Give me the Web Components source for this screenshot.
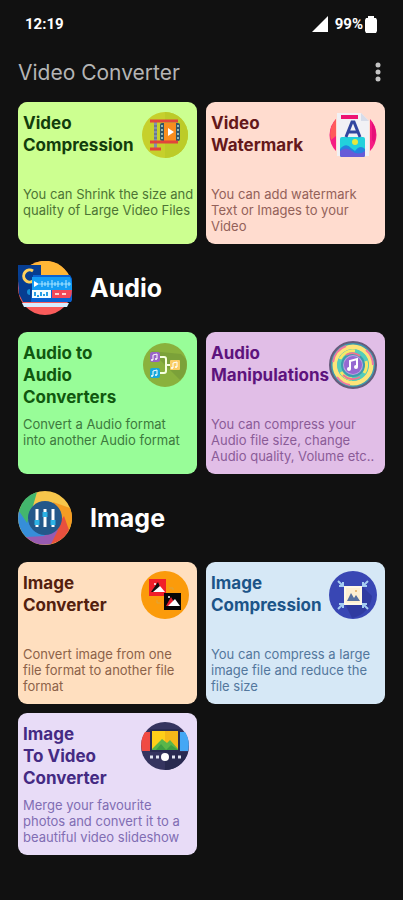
<!DOCTYPE html>
<html lang="en">
<head>
<meta charset="utf-8">
<meta name="viewport" content="width=device-width, initial-scale=1">
<title>Video Converter</title>
<style>
    body {
        margin: 0;
        min-height: 100vh;
        background-color: #111;
        color: #fff;
        font-family: Inter, "Liberation Sans", sans-serif;
    }
</style>
</head>
<body>

<status-bar time="12:19" battery="99%"></status-bar>
<app-header>Video Converter</app-header>

<main>
    <card-grid>
        <tool-card style="--card-bg:#ccff90; --card-title:#123d0c; --card-text:#4c7434">
            <span slot="title">Video<br>Compression</span>
            <svg slot="icon" viewBox="0 0 48 48">
                <circle cx="24" cy="24" r="23" fill="#c6d02c"/>
                <path d="M24 1a23 23 0 0 1 0 46z" fill="#bccb28"/>
                <rect x="13" y="11" width="3" height="27" fill="#8291ad"/>
                <path d="M13 15h3M13 19h3M13 23h3M13 27h3M13 31h3" stroke="#53627f"/>
                <rect x="19" y="12" width="20" height="18" rx="2" fill="#315568"/>
                <path d="M20 15h2M20 19h2M20 23h2M20 27h2M36 15h2M36 19h2M36 23h2M36 27h2" stroke="#93b8b5" stroke-width="2"/>
                <rect x="23" y="12" width="12" height="18" fill="#f78d1f"/>
                <path d="M27 17l6 4-6 4z" fill="#fff"/>
                <path d="M9 10h28M9 31h28M9 38h11" stroke="#e2453a" stroke-width="3"/>
            </svg>
            You can Shrink the size and<br>quality of Large Video Files
        </tool-card>
        <tool-card style="--card-bg:#ffdccf; --card-title:#64181a; --card-text:#936159">
            <span slot="title">Video<br>Watermark</span>
            <svg slot="icon" viewBox="0 0 48 48">
                <path d="M7 8a23 23 0 0 0 0 32z" fill="#f51c83"/>
                <path d="M7 8a23 23 0 0 0-5 21l5-4z" fill="#ff5b5b"/>
                <path d="M41 8a23 23 0 0 1 0 32z" fill="#f51c83"/>
                <path d="M43 11a23 23 0 0 1 2 21l-2-3z" fill="#e60e78"/>
                <path d="M8 2h24l8 8v35H8z" fill="#f1f1f5"/>
                <path d="M32 2v8h8z" fill="#d7dce9"/>
                <rect x="12" y="4" width="17" height="4" fill="#ee1473"/>
                <rect x="11" y="26" width="25" height="20" rx="2" fill="#22d1dc"/>
                <circle cx="26" cy="31" r="3" fill="#e6e83e"/>
                <path d="M11 38q6-7 11-1l4 3q5-7 10-2v6a2 2 0 0 1-2 2H13a2 2 0 0 1-2-2z" fill="#2383df"/>
                <path d="M11 40q6-5 12 0t13 0v4a2 2 0 0 1-2 2H13a2 2 0 0 1-2-2z" fill="#665bd8"/>
                <path d="M17 26l6-15h2l6 15M19 21h10" fill="none" stroke="#31469f" stroke-width="3"/>
            </svg>
            You can add watermark<br>Text or Images to your<br>Video
        </tool-card>
    </card-grid>

    <section-heading>
        <svg slot="icon" viewBox="0 0 54 54">
            <circle cx="27" cy="27" r="27" fill="#f95c5b"/>
            <path d="M2 17A27 27 0 0 1 54 24v3H2z" fill="#ffb636"/>
            <path d="M0 4h23v10h29a27 27 0 0 1 1 27H8L1 33z" fill="#0862d3"/>
            <path d="M0 4h23v10h-8l-2 27H5L1 33z" fill="#063d91"/>
            <path d="M15 10a6 6 0 1 0 0 10" fill="none" stroke="#ffd05c" stroke-width="3"/>
            <path d="M12 28a3 3 0 0 0 0 6z" fill="#148dd5"/>
            <path d="M14 16h38a27 27 0 0 1 2 13H14z" fill="#149df3"/>
            <path d="M16 20l5 3-5 3z" fill="#fff"/>
            <path d="M21 23h32" stroke="#8fdcff"/>
            <path d="M24 20v6M27 21v4M30 20v6M34 19v8M37 21v4M40 20v6M44 21v4M48 19v8M51 21v4" stroke="#b6eaff"/>
            <rect x="14" y="29" width="19" height="8" fill="#f3fbff"/>
            <path d="M17 31v4M20 34v2M23 31v4M26 33v2M29 31v4" stroke="#279de5" stroke-width="2"/>
            <path d="M34 29h20q0 5-2 8H34z" fill="#f34959"/>
            <path d="M37 33h4M44 33h4" stroke="#ffd5d5" stroke-width="2"/>
            <path d="M4 42h47l-2 4H6z" fill="#d8edff"/>
        </svg>
        Audio
    </section-heading>

    <card-grid>
        <tool-card style="--card-bg:#98fd98; --card-title:#10580f; --card-text:#3d793d">
            <span slot="title">Audio to<br>Audio<br>Converters</span>
            <svg slot="icon" viewBox="0 0 48 48">
                <circle cx="24" cy="24" r="22" fill="#8ab13d"/>
                <path d="M10 10l29 29a22 22 0 0 0 6-21l-5-5z" fill="#7ba139"/>
                <path d="M18 16h5q2 0 2 2v12q0 2-2 2h-5M25 24h7" fill="none" stroke="#f6ffdf" stroke-width="2"/>
                <rect x="9" y="11" width="10" height="10" rx="2" fill="#9a63c7"/>
                <rect x="9" y="27" width="10" height="10" rx="2" fill="#17a7dc"/>
                <rect x="29" y="19" width="10" height="10" rx="1" fill="#f9cd64"/>
                <path d="M12 19v-5l4-1v5M12 35v-5l4-1v5M32 27v-5l4-1v5" fill="none" stroke="#fff"/>
                <g fill="#fff">
                    <circle cx="11" cy="19" r="1"/><circle cx="15" cy="18" r="1"/>
                    <circle cx="11" cy="35" r="1"/><circle cx="15" cy="34" r="1"/>
                    <circle cx="31" cy="27" r="1"/><circle cx="35" cy="26" r="1"/>
                </g>
            </svg>
            Convert a Audio format<br>into another Audio format
        </tool-card>
        <tool-card style="--card-bg:#e1bee7; --card-title:#5d137d; --card-text:#8a5b97">
            <span slot="title">Audio<br>Manipulations</span>
            <svg slot="icon" viewBox="0 0 48 48">
                <circle cx="24" cy="24" r="23" fill="#3e9bae" stroke="#665c7c" stroke-width="2"/>
                <circle cx="24" cy="24" r="18" fill="none" stroke="#fde579" stroke-width="5"/>
                <path d="M4 21A20 20 0 0 1 17 5M37 9a20 20 0 0 1 7 15M8 36a20 20 0 0 0 13 8" fill="none" stroke="#ee77a4" stroke-width="2"/>
                <circle cx="24" cy="24" r="14" fill="none" stroke="#54cdbb" stroke-width="4"/>
                <path d="M11 18a14 14 0 0 1 15-8M37 20a14 14 0 0 1-2 12M12 31a14 14 0 0 0 11 7" fill="none" stroke="#f7e866" stroke-width="3"/>
                <path d="M14 34a14 14 0 0 0 17 2M17 14a12 12 0 0 1 14 1" fill="none" stroke="#ed7591" stroke-width="2"/>
                <circle cx="24" cy="24" r="10" fill="#b9a3e0"/>
                <circle cx="24" cy="24" r="9" fill="#9569d1"/>
                <path d="M21 28v-8l7-2v8" fill="none" stroke="#fff" stroke-width="2"/>
                <circle cx="20" cy="28" r="2" fill="#fff"/>
                <circle cx="27" cy="26" r="2" fill="#fff"/>
            </svg>
            You can compress your<br>Audio file size, change<br>Audio quality, Volume etc..
        </tool-card>
    </card-grid>

    <section-heading>
        <svg slot="icon" viewBox="0 0 54 54">
            <circle cx="27" cy="27" r="27" fill="#f7c64b"/>
            <path d="M35 11L52 17A27 27 0 0 1 50 41L42 34z" fill="#f59c22"/>
            <path d="M46 25L51 39A27 27 0 0 1 33 53L33 43z" fill="#e8503e"/>
            <path d="M40 39L33 53A27 27 0 0 1 8 46L21 43z" fill="#985bb1"/>
            <path d="M27 45L8 46A27 27 0 0 1 1 20L9 27z" fill="#368ed9"/>
            <path d="M9 32L1 20A27 27 0 0 1 19 1L15 15z" fill="#43b66d"/>
            <circle cx="27" cy="27" r="17" fill="#23588a"/>
            <path d="M19 18v18M27 18v18M35 18v18" stroke="#fff" stroke-width="3"/>
            <path d="M19 29v5M27 21v5M35 29v5" stroke="#2db2e5" stroke-width="5"/>
        </svg>
        Image
    </section-heading>

    <card-grid>
        <tool-card style="--card-bg:#ffdfbf; --card-title:#53200e; --card-text:#8c6249">
            <span slot="title">Image<br>Converter</span>
            <svg slot="icon" viewBox="0 0 48 48">
                <circle cx="24" cy="24" r="24" fill="#fb9b0b"/>
                <rect x="8" y="8" width="17" height="17" fill="#f11f29"/>
                <path d="M10 21l7-10 2 5-5 5z" fill="#111"/>
                <path d="M12 21l7-6 5 6z" fill="#fff"/>
                <circle cx="14" cy="13" r="1" fill="#fff"/>
                <rect x="23" y="22" width="17" height="17" fill="#070707"/>
                <path d="M25 35l5-9 3 5-4 4z" fill="#e31c2b"/>
                <path d="M27 35l7-7 5 7z" fill="#fff"/>
                <circle cx="28" cy="26" r="1" fill="#fff"/>
                <path d="M28 17h4v2M16 29v3h4" fill="none" stroke="#dda43d"/>
            </svg>
            Convert image from one<br>file format to another file<br>format
        </tool-card>
        <tool-card style="--card-bg:#d6e8f6; --card-title:#1c5488; --card-text:#53779d">
            <span slot="title">Image<br>Compression</span>
            <svg slot="icon" viewBox="0 0 48 48">
                <circle cx="24" cy="24" r="24" fill="#3947b4"/>
                <path d="M33 15l10 10a24 24 0 0 1-20 22l-7-14z" fill="#303ba0"/>
                <rect x="16" y="16" width="16" height="17" fill="#fff0d2" stroke="#fff8e5" stroke-width="2"/>
                <path d="M18 30l4-8 3 5 2-3 4 6z" fill="#5871a0"/>
                <circle cx="27" cy="20" r="1" fill="#e3ad60"/>
                <g fill="none" stroke="#a6cdf2" stroke-width="2">
                    <path d="M9 10l5 5M14 11v4h-4"/>
                    <path d="M39 10l-5 5M34 11v4h4"/>
                    <path d="M9 38l5-5M14 37v-4h-4"/>
                    <path d="M39 38l-5-5M34 37v-4h4"/>
                </g>
            </svg>
            You can compress a large<br>image file and reduce the<br>file size
        </tool-card>
        <tool-card style="--card-bg:#e8dcf7; --card-title:#442a83; --card-text:#806db3">
            <span slot="title">Image<br>To Video<br>Converter</span>
            <svg slot="icon" viewBox="0 0 48 48">
                <circle cx="24" cy="24" r="24" fill="#35345f"/>
                <path d="M4 10h6v19H1A24 24 0 0 1 4 10z" fill="#f04b43"/>
                <path d="M44 10h-6v19h9a24 24 0 0 0-3-19z" fill="#44a7f5"/>
                <rect x="9" y="7" width="30" height="23" fill="#292b52"/>
                <rect x="11" y="9" width="26" height="19" fill="#ffcf19"/>
                <path d="M24 9h13v19H24z" fill="#f5b819"/>
                <path d="M11 27l10-10 5 4 3-3 8 9v1H11z" fill="#59b64a"/>
                <path d="M15 28l5-6 5 6 5-5 7 5z" fill="#3c9e43"/>
                <path d="M24 30h23a24 24 0 0 1-23 18z" fill="#292a50"/>
                <circle cx="24" cy="35" r="4" fill="#fff"/>
                <path d="M9 35h3M15 35h3M31 35h3M37 35h3" stroke="#e1e5f2" stroke-width="3"/>
            </svg>
            Merge your favourite<br>photos and convert it to a<br>beautiful video slideshow
        </tool-card>
    </card-grid>
</main>

<script>
let statusHtml = `
    <style>
        :host {
            display: flex;
            justify-content: space-between;
            align-items: center;
            height: 48px;
            padding: 0 26px 0 25px;
            font: 700 15px Roboto, sans-serif;
        }
        .right {
            display: flex;
            align-items: center;
        }
        .signal {
            width: 16px;
            height: 16px;
            margin-right: 7px;
        }
        .battery {
            width: 12px;
            height: 17px;
            margin-left: 2px;
        }
    </style>

    <span id="time"></span>
    <div class="right">
        <svg class="signal" viewBox="0 0 16 16" fill="#fff"><path d="M16 0v16H0z"/></svg>
        <span id="battery"></span>
        <svg class="battery" viewBox="0 0 12 17" fill="#fff"><path d="M3 2V0h6v2h2l1 2v11l-1 2H1l-1-2V4l1-2z"/></svg>
    </div>
`

class StatusBar extends HTMLElement {
    constructor() {
        super();
        this.attachShadow({ mode: "open" });
        this.shadowRoot.innerHTML = statusHtml;
    }

    connectedCallback() {
        this.shadowRoot.querySelector('#time').textContent = this.getAttribute('time');
        this.shadowRoot.querySelector('#battery').textContent = this.getAttribute('battery');
    }
}

let headerHtml = `
    <style>
        :host {
            display: flex;
            justify-content: space-between;
            align-items: center;
            height: 48px;
            padding: 0 12px 6px 18px;
        }
        h1 {
            margin: 0;
            color: #b5b5b5;
            font-size: 21px;
            font-weight: 400;
        }
        button {
            width: 26px;
            height: 40px;
            padding: 0;
            border: none;
            background: none;
            cursor: pointer;
        }
        svg {
            display: block;
            margin: auto;
        }
    </style>

    <h1><slot></slot></h1>
    <button type="button" aria-label="More options">
        <svg width="6" height="20" viewBox="0 0 6 20" fill="#c4c4c4">
            <circle cx="3" cy="3" r="2.5"/>
            <circle cx="3" cy="10" r="2.5"/>
            <circle cx="3" cy="17" r="2.5"/>
        </svg>
    </button>
`

class AppHeader extends HTMLElement {
    constructor() {
        super();
        this.attachShadow({ mode: "open" });
        this.shadowRoot.innerHTML = headerHtml;
    }
}

let gridHtml = `
    <style>
        :host {
            display: grid;
            grid-template-columns: 1fr 1fr;
            gap: 9px;
            padding: 0 18px;
        }
    </style>

    <slot></slot>
`

class CardGrid extends HTMLElement {
    constructor() {
        super();
        this.attachShadow({ mode: "open" });
        this.shadowRoot.innerHTML = gridHtml;
    }
}

let headingHtml = `
    <style>
        :host {
            display: flex;
            align-items: center;
            gap: 18px;
            padding: 17px 18px;
        }
        ::slotted(svg) {
            display: block;
            width: 54px;
            height: 54px;
        }
        h2 {
            margin: 0;
            font-size: 25px;
            font-weight: 700;
            line-height: 32px;
        }
    </style>

    <slot name="icon"></slot>
    <h2><slot></slot></h2>
`

class SectionHeading extends HTMLElement {
    constructor() {
        super();
        this.attachShadow({ mode: "open" });
        this.shadowRoot.innerHTML = headingHtml;
    }
}

let cardHtml = `
    <style>
        :host {
            display: block;
            min-width: 0;
        }
        a {
            display: block;
            box-sizing: border-box;
            height: 100%;
            padding: 9px 2px 10px 5px;
            border-radius: 9px;
            background-color: var(--card-bg);
            color: var(--card-text);
            text-decoration: none;
        }
        .top {
            display: flex;
            justify-content: space-between;
            min-height: 68px;
            padding-right: 6px;
        }
        h3 {
            flex: 1;
            min-width: 0;
            margin: 0;
            padding-top: 1px;
            color: var(--card-title);
            font-size: 17px;
            font-weight: 700;
            line-height: 22px;
        }
        ::slotted(svg) {
            display: block;
            flex: none;
            width: 48px;
            height: 48px;
        }
        p {
            min-height: 48px;
            margin: 7px 0 0;
            font-size: 13px;
            line-height: 16px;
        }
    </style>

    <a href="#">
        <div class="top">
            <h3><slot name="title"></slot></h3>
            <slot name="icon"></slot>
        </div>
        <p><slot></slot></p>
    </a>
`

class ToolCard extends HTMLElement {
    constructor() {
        super();
        this.attachShadow({ mode: "open" });
        this.shadowRoot.innerHTML = cardHtml;
    }
}

window.customElements.define("status-bar", StatusBar);
window.customElements.define("app-header", AppHeader);
window.customElements.define("card-grid", CardGrid);
window.customElements.define("section-heading", SectionHeading);
window.customElements.define("tool-card", ToolCard);
</script>
</body>
</html>
